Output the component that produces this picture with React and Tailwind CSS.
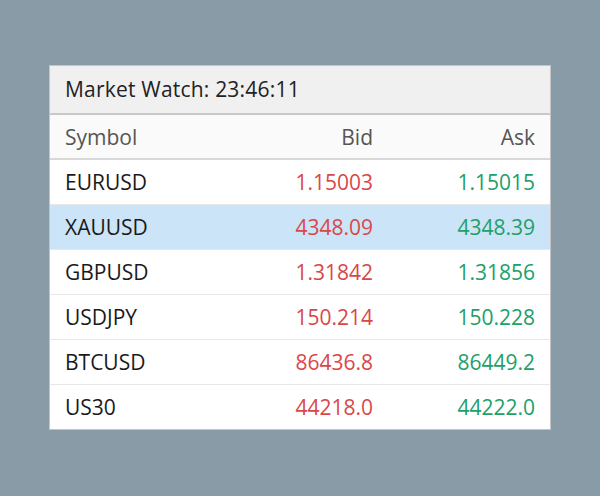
export default function App() {
  const rows = [
    ["EURUSD", "1.15003", "1.15015"],
    ["XAUUSD", "4348.09", "4348.39", true],
    ["GBPUSD", "1.31842", "1.31856"],
    ["USDJPY", "150.214", "150.228"],
    ["BTCUSD", "86436.8", "86449.2"],
    ["US30", "44218.0", "44222.0"],
  ];
  return (
    <div
      className="w-[600px] h-[496px] bg-[#8a9ba8] pt-[65px] pl-[49px]"
      style={{ fontFamily: '"Open Sans", "Noto Sans", sans-serif' }}
    >
      <div className="w-[502px] border border-[#c4c4c4] bg-white">
        <div className="h-[49px] bg-[#f0f0f0] border-b-2 border-[#c8c8c8] flex items-center px-[15px] pt-[1px] text-[21px] tracking-[0.2px] text-[#222]">
          Market Watch: 23:46:11
        </div>
        <div className="h-[45px] bg-[#fafafa] border-b-2 border-[#d8d8d8] grid grid-cols-[1fr_160px_162px] items-center px-[15px] pt-[2px] text-[21px] text-[#555]">
          <div>Symbol</div>
          <div className="text-right">Bid</div>
          <div className="text-right">Ask</div>
        </div>
        {rows.map(([s, b, a, sel], i) => (
          <div
            key={s}
            className={
              "grid grid-cols-[1fr_160px_162px] items-center px-[15px] pt-[2px] text-[21px] " +
              (i < rows.length - 1 ? "h-[45px] border-b border-[#e8e8e8] " : "h-[44px] ") +
              (sel ? "bg-[#cce4f7]" : "bg-white")
            }
          >
            <div className="text-[#1a1a1a]">{s}</div>
            <div className="text-right text-[#d94848]">{b}</div>
            <div className="text-right text-[#21a067]">{a}</div>
          </div>
        ))}
      </div>
    </div>
  );
}
